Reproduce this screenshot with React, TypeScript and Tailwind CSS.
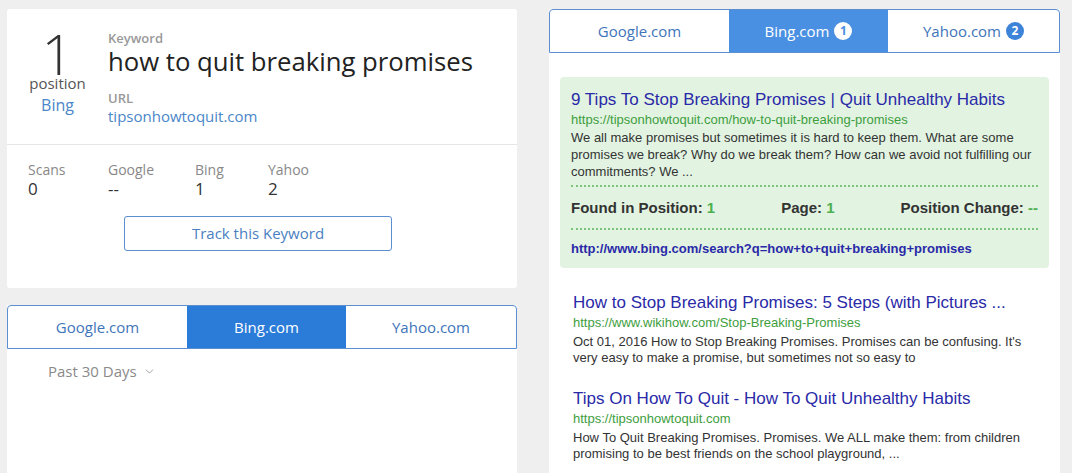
import { ChevronDown } from "lucide-react";

const sans = "font-['Open_Sans',sans-serif]";
const arial = "font-['Liberation_Sans',Arial,sans-serif]";

const stats = [
  { label: "Scans", value: "0", w: "w-[80px]" },
  { label: "Google", value: "--", w: "w-[87px]" },
  { label: "Bing", value: "1", w: "w-[73px]" },
  { label: "Yahoo", value: "2", w: "w-[60px]" },
];

const results = [
  {
    title: "How to Stop Breaking Promises: 5 Steps (with Pictures ...",
    url: "https://www.wikihow.com/Stop-Breaking-Promises",
    desc: "Oct 01, 2016 How to Stop Breaking Promises. Promises can be confusing. It's very easy to make a promise, but sometimes not so easy to",
  },
  {
    title: "Tips On How To Quit - How To Quit Unhealthy Habits",
    url: "https://tipsonhowtoquit.com",
    desc: "How To Quit Breaking Promises. Promises. We ALL make them: from children promising to be best friends on the school playground, ...",
  },
];

function KeywordCard() {
  return (
    <div className="shrink-0 rounded-[3px] bg-white">
      <div className="flex border-b border-[#e6e6e6] pt-[21px] pb-[18px]">
        <div className="flex w-[101px] flex-col items-center">
          <div className="mt-[-5px] text-[56px] leading-none font-light text-[#333]">1</div>
          <div className="mt-[-7px] text-[15px] leading-[18px] text-[#555]">position</div>
          <div className="mt-[4px] text-[16px] leading-[18px] text-[#4a86c8]">Bing</div>
        </div>
        <div className="flex flex-col">
          <div className="text-[13px] leading-[16px] font-semibold text-[#999]">Keyword</div>
          <div className="text-[25.7px] leading-[32px] text-[#222]">how to quit breaking promises</div>
          <div className="mt-[12px] text-[13px] leading-[16px] font-semibold text-[#999]">URL</div>
          <div className="text-[15px] leading-[20px] text-[#4a86c8]">tipsonhowtoquit.com</div>
        </div>
      </div>
      <div className="flex pt-[16px] pl-[21px]">
        {stats.map((s) => (
          <div key={s.label} className={s.w}>
            <div className="text-[14px] leading-[18px] text-[#888]">{s.label}</div>
            <div className="text-[17px] leading-[20px] text-[#333]">{s.value}</div>
          </div>
        ))}
      </div>
      <div className="pt-[17px] pb-[37px] pl-[117px]">
        <button className="h-[35px] w-[268px] rounded-[3px] border border-[#5b8fd0] text-[15px] text-[#4a7fc2]">
          Track this Keyword
        </button>
      </div>
    </div>
  );
}

function Badge({ n, active }: { n: string; active: boolean }) {
  return (
    <span
      className={
        active
          ? "ml-[5px] flex h-[18px] w-[18px] items-center justify-center rounded-full bg-white text-[12px] font-bold text-[#4a90e2]"
          : "ml-[5px] flex h-[18px] w-[18px] items-center justify-center rounded-full bg-[#3d84d9] text-[12px] font-bold text-white"
      }
    >
      {n}
    </span>
  );
}

function Tabs({ activeBg, badges }: { activeBg: string; badges: boolean }) {
  return (
    <div className="flex h-[44px] shrink-0 overflow-hidden rounded-t-[4px] border border-[#5b8fd0] bg-white text-[15px]">
      <div className="flex w-[179px] items-center justify-center text-[#3f75ba]">Google.com</div>
      <div className={`flex w-[159px] items-center justify-center text-white ${activeBg}`}>
        Bing.com
        {badges && <Badge n="1" active />}
      </div>
      <div className="flex flex-1 items-center justify-center text-[#3f75ba]">
        Yahoo.com
        {badges && <Badge n="2" active={false} />}
      </div>
    </div>
  );
}

export default function App() {
  return (
    <div className={`flex h-[473px] gap-[32px] overflow-hidden bg-[#efefef] pt-[9px] pl-[7px] ${sans}`}>
      <div className="flex w-[510px] flex-col">
        <KeywordCard />
        <div className="mt-[17px] flex flex-1 flex-col bg-white">
          <Tabs activeBg="bg-[#2b7bd8]" badges={false} />
          <div className="flex items-center pt-[12px] pl-[41px] text-[15px] leading-[20px] text-[#8a8a8a]">
            Past 30 Days
            <ChevronDown className="ml-[6px] h-[13px] w-[13px]" strokeWidth={1.5} />
          </div>
        </div>
      </div>

      <div className="flex w-[511px] flex-col bg-white">
        <Tabs activeBg="bg-[#4a90e2]" badges />
        <div className={`shrink-0 px-[11px] pt-[24px] ${arial}`}>
          <div className="rounded-[4px] bg-[#e2f3e1] px-[11px] pt-[13px] pb-[11px]">
            <div className="text-[17px] leading-[20px] text-[#2a2aa8]">
              9 Tips To Stop Breaking Promises | Quit Unhealthy Habits
            </div>
            <div className="mt-[1px] text-[13px] leading-[18px] text-[#3e9e3e]">
              https://tipsonhowtoquit.com/how-to-quit-breaking-promises
            </div>
            <p className="text-[13px] leading-[17px] text-[#333]">
              We all make promises but sometimes it is hard to keep them. What are some promises we
              break? Why do we break them? How can we avoid not fulfilling our commitments? We ...
            </p>
            <div className="mt-[5px] border-t-2 border-dotted border-[#7cc47a]" />
            <div className="flex justify-between pt-[11px] pb-[10px] text-[15px] leading-[20px] font-bold text-[#333]">
              <span>
                Found in Position: <span className="text-[#4caf50]">1</span>
              </span>
              <span>
                Page: <span className="text-[#4caf50]">1</span>
              </span>
              <span>
                Position Change: <span className="text-[#4caf50]">--</span>
              </span>
            </div>
            <div className="border-t-2 border-dotted border-[#7cc47a]" />
            <div className="mt-[11px] text-[13px] leading-[16px] font-bold text-[#2a2aa8]">
              http://www.bing.com/search?q=how+to+quit+breaking+promises
            </div>
          </div>

          <div className="pt-[25px] pl-[13px] pr-[11px]">
            {results.map((r) => (
              <div key={r.title} className="mb-[23px]">
                <div className="text-[17px] leading-[20px] text-[#2a2aa8]">{r.title}</div>
                <div className="mt-[1px] text-[13px] leading-[18px] text-[#3e9e3e]">{r.url}</div>
                <p className="mt-[2px] text-[13px] leading-[16px] text-[#333]">{r.desc}</p>
              </div>
            ))}
          </div>
        </div>
      </div>
    </div>
  );
}
